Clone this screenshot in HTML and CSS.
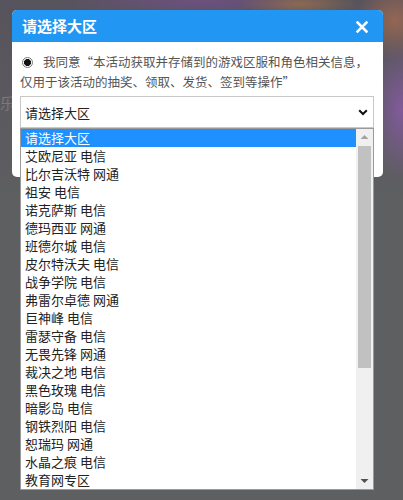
FILE: index.html
```html
<!DOCTYPE html>
<html lang="zh-CN">
<head>
<meta charset="utf-8">
<title>请选择大区</title>
<link rel="stylesheet" href="styles.css">
</head>
<body>
<div class="bg-text">乐玉</div>
<div class="dialog">
  <div class="header">
    <span class="title">请选择大区</span>
    <svg class="close" width="12" height="12" viewBox="0 0 12 12"><path d="M1.5 1.5 L10.5 10.5 M10.5 1.5 L1.5 10.5" stroke="#fff" stroke-width="2.6" stroke-linecap="square"/></svg>
  </div>
  <div class="content">
    <p class="agree"><span class="radio"></span><span class="agree-text">我同意“本活动获取并存储到的游戏区服和角色相关信息，仅用于该活动的抽奖、领取、发货、签到等操作”</span></p>
    <div class="select">
      <span>请选择大区</span>
      <svg class="chev" width="10" height="7" viewBox="0 0 10 7"><path d="M1.2 1.2 L5 5 L8.8 1.2" fill="none" stroke="#111" stroke-width="2"/></svg>
    </div>
  </div>
</div>
<div class="list">
  <ul class="options">
    <li class="selected">请选择大区</li>
    <li>艾欧尼亚 电信</li>
    <li>比尔吉沃特 网通</li>
    <li>祖安 电信</li>
    <li>诺克萨斯 电信</li>
    <li>德玛西亚 网通</li>
    <li>班德尔城 电信</li>
    <li>皮尔特沃夫 电信</li>
    <li>战争学院 电信</li>
    <li>弗雷尔卓德 网通</li>
    <li>巨神峰 电信</li>
    <li>雷瑟守备 电信</li>
    <li>无畏先锋 网通</li>
    <li>裁决之地 电信</li>
    <li>黑色玫瑰 电信</li>
    <li>暗影岛 电信</li>
    <li>钢铁烈阳 电信</li>
    <li>恕瑞玛 网通</li>
    <li>水晶之痕 电信</li>
    <li>教育网专区</li>
  </ul>
  <div class="scrollbar">
    <svg class="arrow" width="17" height="15" viewBox="0 0 17 15"><path d="M4.5 10 L8.5 6 L12.5 10 Z" fill="#a3a3a3"/></svg>
    <div class="track"><div class="thumb"></div></div>
    <svg class="arrow" width="17" height="15" viewBox="0 0 17 15"><path d="M4.5 5 L8.5 9 L12.5 5 Z" fill="#505050"/></svg>
  </div>
</div>
</body>
</html>
```
FILE: styles.css
```css
html, body {
  margin: 0;
  padding: 0;
}
body {
  width: 403px;
  height: 500px;
  overflow: hidden;
  position: relative;
  font-family: "Noto Sans CJK SC", "Noto Sans", sans-serif;
  background:
    radial-gradient(ellipse 30px 70px at 400px 110px, rgba(135, 90, 165, 0.85), rgba(135, 90, 165, 0) 100%),
    radial-gradient(ellipse 40px 40px at 395px 20px, rgba(175, 110, 80, 0.7), rgba(175, 110, 80, 0) 100%),
    radial-gradient(ellipse 60px 14px at 300px 4px, rgba(170, 120, 70, 0.6), rgba(170, 120, 70, 0) 100%),
    radial-gradient(ellipse 140px 14px at 200px 2px, rgba(115, 80, 140, 0.75), rgba(115, 80, 140, 0) 100%),
    linear-gradient(to bottom, #57535c 0px, #5e5f61 200px, #5e5f61 500px);
}
.bg-text {
  position: absolute;
  left: 0;
  top: 92px;
  font-size: 15px;
  color: #7a7a7c;
}
.dialog {
  position: relative;
  margin: 10px 0 0 12px;
  width: 371px;
  background: #fff;
  border-radius: 5px;
  overflow: hidden;
}
.header {
  height: 32px;
  background: #2196f3;
  display: flex;
  align-items: center;
  justify-content: space-between;
  padding: 0 15px 0 10px;
}
.title {
  color: #fff;
  font-size: 15px;
  font-weight: bold;
  line-height: 32px;
}
.close {
  display: block;
  margin-top: 1px;
}
.content {
  padding: 10px 9px 49px 8px;
}
.agree {
  margin: 0;
  font-size: 12.5px;
  line-height: 20px;
  color: #555;
}
.radio {
  display: inline-block;
  box-sizing: border-box;
  width: 11px;
  height: 11px;
  border-radius: 50%;
  border: 1px solid #777;
  background: radial-gradient(circle, #111 0, #111 3.2px, #fff 3.8px);
  margin: 0 10px 0 2px;
  vertical-align: -1px;
}
.select {
  margin-top: 4px;
  height: 32px;
  box-sizing: border-box;
  border: 1px solid #c8c8c8;
  display: flex;
  align-items: center;
  justify-content: space-between;
  padding: 0 5px 0 4px;
  font-size: 13px;
  color: #222;
}
.chev {
  display: block;
}
.list {
  position: absolute;
  left: 20px;
  top: 128px;
  width: 354px;
  height: 362px;
  box-sizing: border-box;
  border: 1px solid #9a9a9a;
  background: #fff;
  display: flex;
}
.options {
  list-style: none;
  margin: 0;
  padding: 0;
  flex: 1;
}
.options li {
  height: 18px;
  line-height: 18px;
  padding-left: 4px;
  font-size: 13px;
  color: #222;
  white-space: nowrap;
}
.options li.selected {
  background: #1e90ff;
  color: #fff;
}
.scrollbar {
  width: 17px;
  background: #f0f0f0;
  display: flex;
  flex-direction: column;
}
.arrow {
  display: block;
  flex: none;
}
.track {
  flex: 1;
  padding: 2px 2px 0 2px;
}
.thumb {
  height: 222px;
  background: #c1c1c1;
}
```
